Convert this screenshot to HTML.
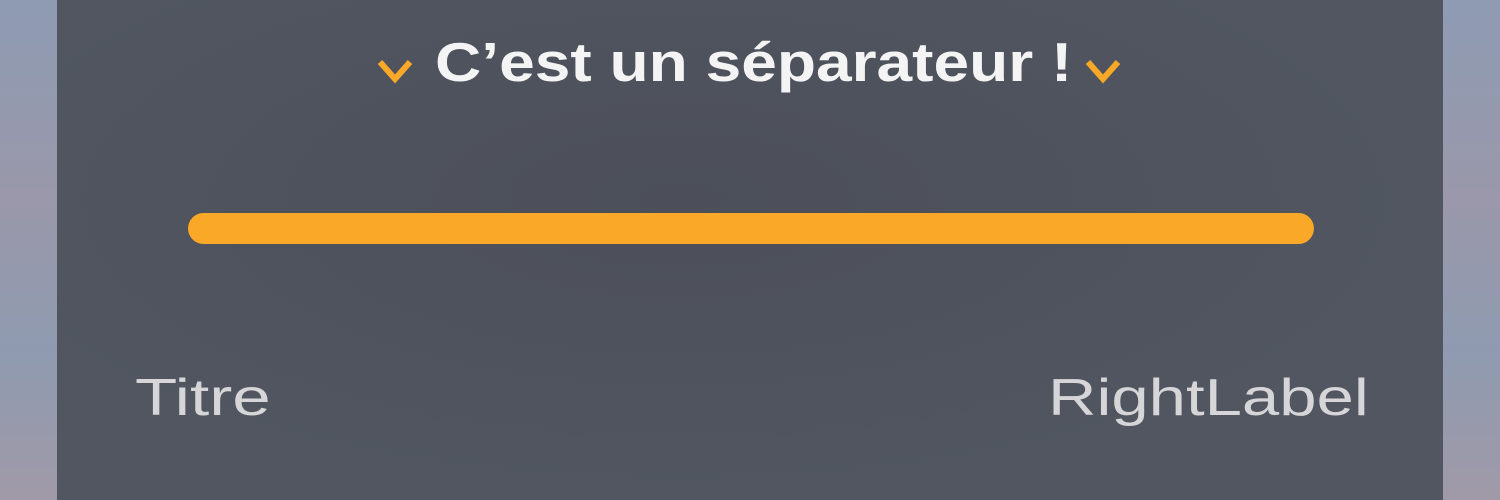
<!DOCTYPE html>
<html><head><style>
body{margin:0;width:1500px;height:500px;overflow:hidden;background:linear-gradient(180deg,#8e9bb3,#9a98aa 40%,#8f9ab0 70%,#a09aa8);position:relative;font-family:"Liberation Sans",sans-serif}
.p{position:absolute;left:57px;top:0;width:1386px;height:500px;background:radial-gradient(ellipse at 45% 40%,#4c4f59,#515661 70%);}
.t{position:absolute;left:378px;top:30px;color:#f4f4f4;font-weight:bold;font-size:55px;transform:scaleX(1.165);transform-origin:0 0;white-space:nowrap}
.c{position:absolute;top:58px}
.bar{position:absolute;left:131px;top:213px;width:1126px;height:31px;border-radius:16px;background:#f9a828}
.l{position:absolute;top:368px;font-size:52px;color:#d6d6d8;white-space:nowrap;transform-origin:0 0}
</style></head><body>
<div class="p">
<svg class="c" style="left:320px" width="36" height="26" viewBox="0 0 36 26"><path d="M3 4 L18 21 L33 4" fill="none" stroke="#f9a828" stroke-width="6"/></svg>
<div class="t">C’est un séparateur !</div>
<svg class="c" style="left:1028px" width="36" height="26" viewBox="0 0 36 26"><path d="M3 4 L18 21 L33 4" fill="none" stroke="#f9a828" stroke-width="6"/></svg>
<div class="bar"></div>
<div class="l" style="left:78px;transform:scaleX(1.33)">Titre</div>
<div class="l" style="left:991px;transform:scaleX(1.29)">RightLabel</div>
</div>
</body></html>
